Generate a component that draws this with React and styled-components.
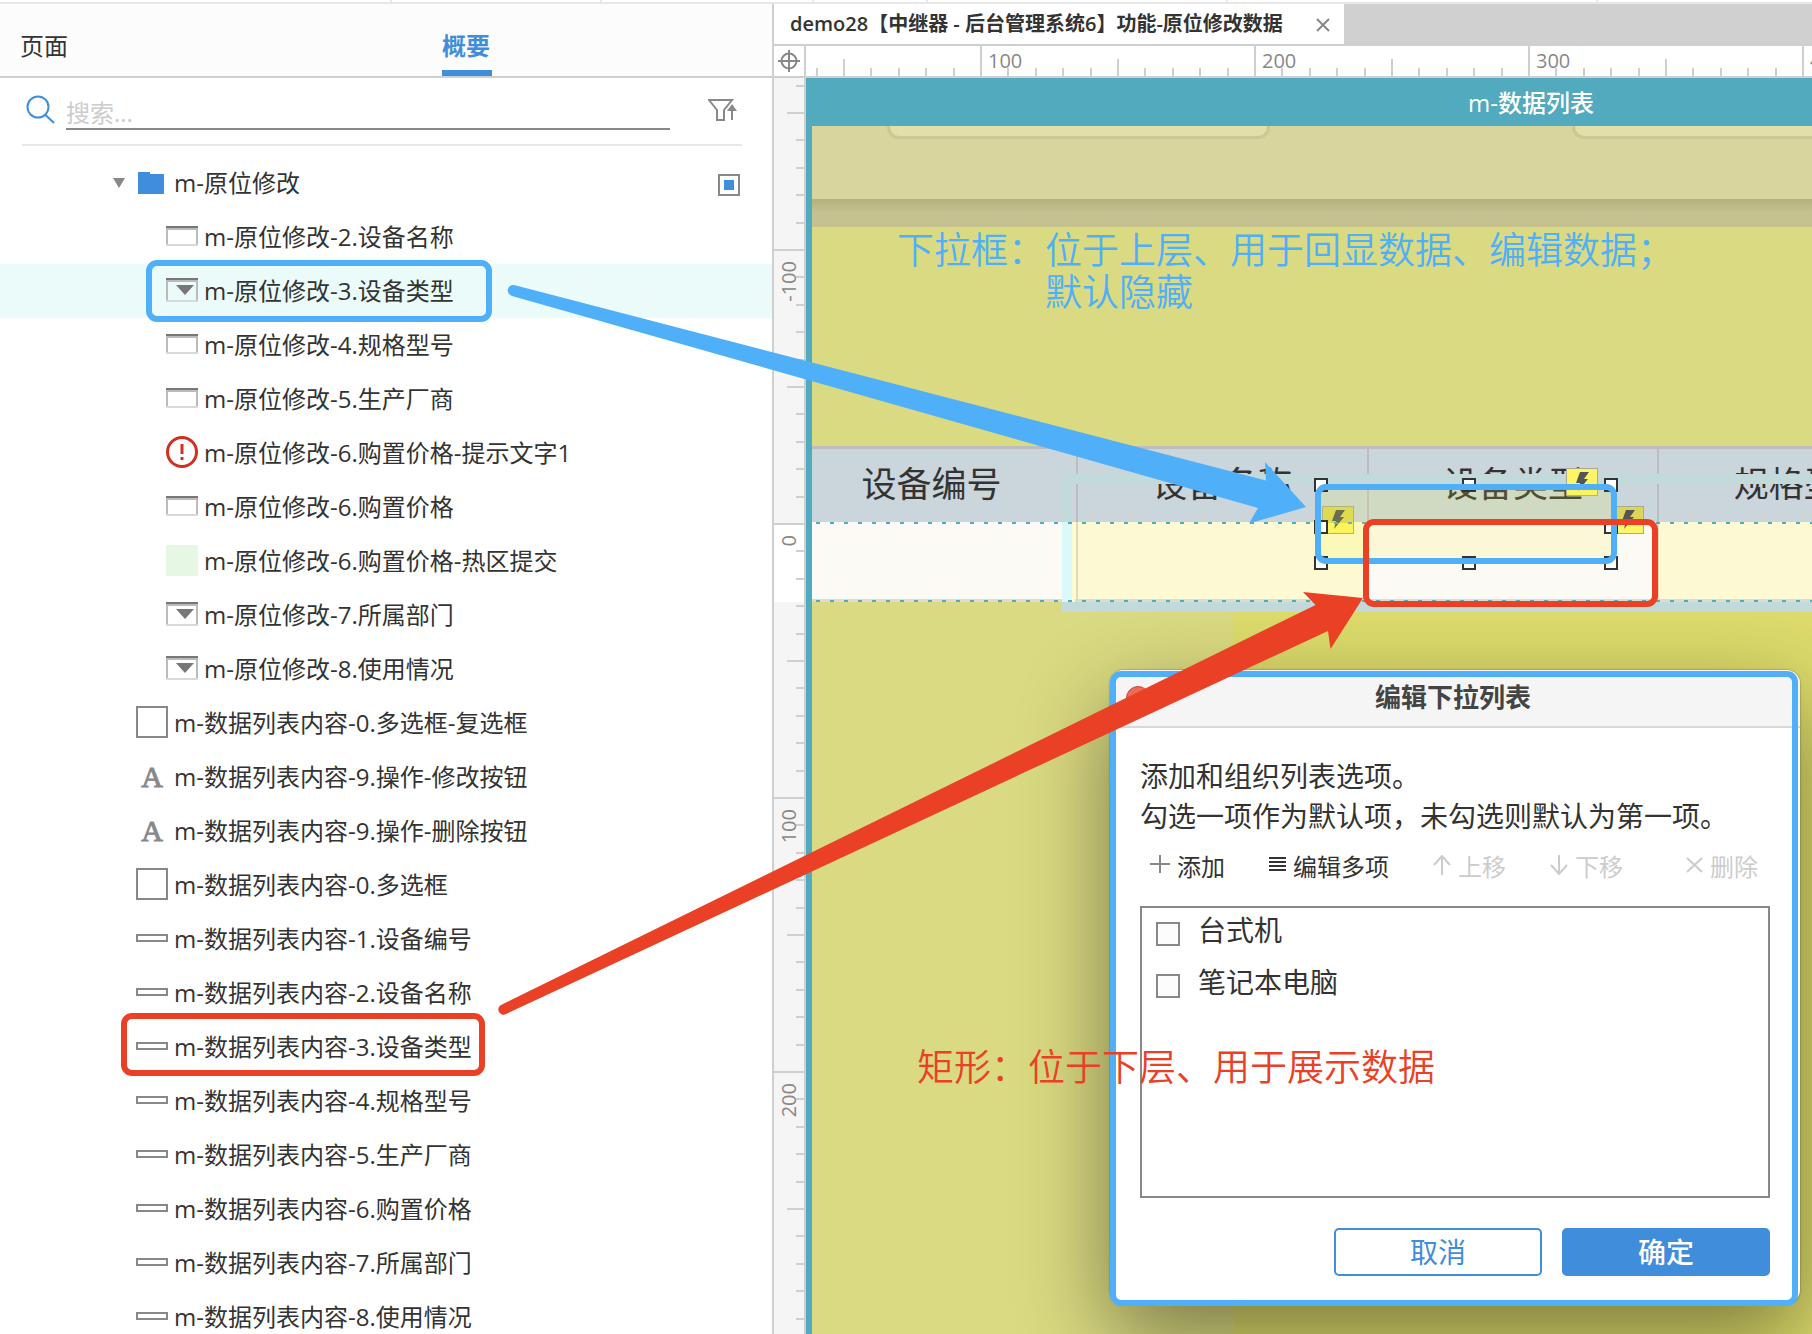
import React from 'react'
import styled, { createGlobalStyle, css } from 'styled-components'

const GlobalStyle = createGlobalStyle`
  * {
    box-sizing: border-box;
  }
  body {
    margin: 0;
    overflow: hidden;
    color: #333;
    background: #fff;
    font-family: 'Open Sans', 'Noto Sans CJK SC', sans-serif;
  }
  button, input {
    font-family: inherit;
    color: inherit;
  }
  button {
    padding: 0;
    border: none;
    background: none;
  }
  ul {
    list-style: none;
    margin: 0;
    padding: 0;
  }
`

const children = [
  { icon: 'input', name: 'm-原位修改-2.设备名称' },
  { icon: 'select', name: 'm-原位修改-3.设备类型', active: true },
  { icon: 'input', name: 'm-原位修改-4.规格型号' },
  { icon: 'input', name: 'm-原位修改-5.生产厂商' },
  { icon: 'warn', name: 'm-原位修改-6.购置价格-提示文字1' },
  { icon: 'input', name: 'm-原位修改-6.购置价格' },
  { icon: 'hot', name: 'm-原位修改-6.购置价格-热区提交' },
  { icon: 'select', name: 'm-原位修改-7.所属部门' },
  { icon: 'select', name: 'm-原位修改-8.使用情况' },
]

const items = [
  { icon: 'box', name: 'm-数据列表内容-0.多选框-复选框' },
  { icon: 'text', name: 'm-数据列表内容-9.操作-修改按钮' },
  { icon: 'text', name: 'm-数据列表内容-9.操作-删除按钮' },
  { icon: 'box', name: 'm-数据列表内容-0.多选框' },
  { icon: 'rect', name: 'm-数据列表内容-1.设备编号' },
  { icon: 'rect', name: 'm-数据列表内容-2.设备名称' },
  { icon: 'rect', name: 'm-数据列表内容-3.设备类型' },
  { icon: 'rect', name: 'm-数据列表内容-4.规格型号' },
  { icon: 'rect', name: 'm-数据列表内容-5.生产厂商' },
  { icon: 'rect', name: 'm-数据列表内容-6.购置价格' },
  { icon: 'rect', name: 'm-数据列表内容-7.所属部门' },
  { icon: 'rect', name: 'm-数据列表内容-8.使用情况' },
]

const columns = ['设备编号', '设备名称', '设备类型', '规格型号', '生产厂商']
const handles = [[0, 0], [148, 0], [290, 0], [0, 42], [290, 42], [0, 78], [148, 78], [290, 78]]

const WidgetIcon = ({ type }) => {
  if (type === 'text') return <LetterIcon>A</LetterIcon>
  return (
    <svg width='32' height='34' viewBox='0 0 32 34' fill='none'>
      {type === 'input' && (
        <>
          <path d='M1 8V24M31 8V24' stroke='#bbb' strokeWidth='2' />
          <path d='M0 9H32' stroke='#bbb' strokeWidth='2' />
          <path d='M0 7H32' stroke='#777' strokeWidth='2' />
          <path d='M0 25H32' stroke='#d9d9d9' strokeWidth='2' />
        </>
      )}
      {type === 'select' && (
        <>
          <path d='M1 6V26M31 6V26' stroke='#bbb' strokeWidth='2' />
          <path d='M0 7H32' stroke='#bbb' strokeWidth='2' />
          <path d='M0 5H32' stroke='#777' strokeWidth='2' />
          <path d='M0 27H32' stroke='#d9d9d9' strokeWidth='2' />
          <path d='M10 11H28L19 21Z' fill='#777' />
        </>
      )}
      {type === 'warn' && (
        <>
          <circle cx='16' cy='16' r='14.5' stroke='#cf3020' strokeWidth='3' />
          <path d='M16 8V18M16 21V24' stroke='#cf3020' strokeWidth='3' />
        </>
      )}
      {type === 'hot' && <path d='M0 1H32V32H0Z' fill='#e6f8e3' />}
      {type === 'box' && <path d='M1 1H31V31H1Z' stroke='#888' strokeWidth='2' />}
      {type === 'rect' && <path d='M1 13H31V19H1Z' stroke='#888' strokeWidth='2' />}
    </svg>
  )
}

const Ruler = ({ vertical, labels }) => (
  <RulerTrack $vertical={vertical}>
    {labels.map((label, i) => (
      <Century key={i} $vertical={vertical}>
        {Array.from({ length: 10 }, (_, n) => (
          <Tick key={n} $vertical={vertical} $size={n === 0 ? 30 : n === 5 ? 17 : 8}>
            {n === 0 && label && <TickLabel $vertical={vertical}>{label}</TickLabel>}
          </Tick>
        ))}
      </Century>
    ))}
  </RulerTrack>
)

const Bolt = () => (
  <svg width='14' height='20' viewBox='0 0 14 20'>
    <path d='M5 0H14L9 7H13L3 19L5 11H1Z' fill='#555' />
  </svg>
)

const Outline = () => (
  <Sidebar>
    <Tabs>
      <Tab type='button'>页面</Tab>
      <Tab type='button' $active>概要</Tab>
    </Tabs>
    <Search>
      <svg width='30' height='30' viewBox='0 0 30 30' fill='none' stroke='#3f8ddb' strokeWidth='2'>
        <circle cx='12' cy='12' r='10.5' />
        <path d='M19.5 20L28 28' />
      </svg>
      <SearchInput aria-label='搜索' placeholder='搜索...' />
      <FilterButton type='button' aria-label='筛选'>
        <svg width='30' height='24' viewBox='0 0 30 24' fill='none' stroke='#888' strokeWidth='2'>
          <path d='M1 2H24L16 12V22H9V12L1 2Z' />
          <path d='M24 22V12' />
          <path d='M19 13L24 6L29 13Z' fill='#888' stroke='none' />
        </svg>
      </FilterButton>
    </Search>
    <ul>
      <Row $level={0}>
        <svg width='12' height='10' viewBox='0 0 12 10'>
          <path d='M0 0H12L6 10Z' fill='#888' />
        </svg>
        <Folder width='26' height='22' viewBox='0 0 26 22'>
          <path d='M0 0H12V2H26V22H0Z' fill='#3f8ddb' />
        </Folder>
        <RowName>m-原位修改</RowName>
        <Visible type='checkbox' aria-label='显示 m-原位修改' defaultChecked />
      </Row>
      {children.map((item, i) => (
        <Row key={i} $level={2} $active={item.active}>
          <WidgetIcon type={item.icon} />
          <span>{item.name}</span>
        </Row>
      ))}
      {items.map((item, i) => (
        <Row key={i} $level={1}>
          <WidgetIcon type={item.icon} />
          <span>{item.name}</span>
        </Row>
      ))}
    </ul>
  </Sidebar>
)

const ListDialog = () => (
  <Dialog role='dialog' aria-labelledby='dialog-title'>
    <DialogHeader>
      <DialogClose type='button' aria-label='关闭' />
      <DialogTitle id='dialog-title'>编辑下拉列表</DialogTitle>
    </DialogHeader>
    <DialogBody>
      <Hint>
        添加和组织列表选项。
        <br />
        勾选一项作为默认项，未勾选则默认为第一项。
      </Hint>
      <Toolbar>
        <Tool type='button'>
          <svg width='20' height='20' viewBox='0 0 20 20' stroke='#888' strokeWidth='2'>
            <path d='M0 9H20M10 0V18' />
          </svg>
          添加
        </Tool>
        <Tool type='button'>
          <svg width='17' height='18' viewBox='0 0 17 18' stroke='#333' strokeWidth='2'>
            <path d='M0 2H17M0 6H17M0 10H17M0 14H17' />
          </svg>
          编辑多项
        </Tool>
        <Tool type='button' disabled>
          <svg width='18' height='20' viewBox='0 0 18 20' stroke='#ccc' strokeWidth='2' fill='none'>
            <path d='M9 20V2M1 10L9 1L17 10' />
          </svg>
          上移
        </Tool>
        <Tool type='button' disabled>
          <svg width='18' height='20' viewBox='0 0 18 20' stroke='#ccc' strokeWidth='2' fill='none'>
            <path d='M9 0V18M1 10L9 19L17 10' />
          </svg>
          下移
        </Tool>
        <Tool type='button' disabled>
          <svg width='17' height='18' viewBox='0 0 17 18' stroke='#ccc' strokeWidth='2'>
            <path d='M1 2L16 16M16 2L1 16' />
          </svg>
          删除
        </Tool>
      </Toolbar>
      <Options>
        {['台式机', '笔记本电脑'].map((name) => (
          <Option key={name}>
            <Check type='checkbox' />
            <span>{name}</span>
          </Option>
        ))}
      </Options>
      <Actions>
        <Action type='button'>取消</Action>
        <Action type='button' $primary>确定</Action>
      </Actions>
    </DialogBody>
  </Dialog>
)

const App = () => (
  <>
    <GlobalStyle />
    <Page>
      <TopStrip>
        <i />
        <i />
        <i />
        <i />
        <i />
        <i />
      </TopStrip>
      <Main>
        <Outline />
        <Workspace>
          <FileTabs>
            <FileTab>
              demo28【中继器 - 后台管理系统6】功能-原位修改数据
              <button type='button' aria-label='关闭标签'>
                <svg width='14' height='14' viewBox='0 0 14 14' stroke='#888' strokeWidth='2'>
                  <path d='M1 1L13 13M13 1L1 13' />
                </svg>
              </button>
            </FileTab>
          </FileTabs>
          <Board>
            <Corner>
              <svg width='22' height='22' viewBox='0 0 22 22' fill='none' stroke='#888' strokeWidth='2'>
                <circle cx='11' cy='11' r='7.5' />
                <path d='M11 0V22M0 11H22' />
              </svg>
            </Corner>
            <Ruler labels={['', '100', '200', '300', '400']} />
            <Ruler vertical labels={['', '-100', '0', '100', '200']} />
            <Canvas>
              <ArtTitle>m-数据列表</ArtTitle>
              <ArtBody>
                <FormPanel>
                  <Field />
                  <Field />
                </FormPanel>
                <PanelShadow />
                <Table>
                  <thead>
                    <tr>
                      {columns.map((name) => <th key={name}>{name}</th>)}
                    </tr>
                  </thead>
                  <tbody>
                    <tr>
                      {columns.map((name, i) => <Cell key={name} $plain={i === 0 || i === 2} />)}
                    </tr>
                  </tbody>
                </Table>
                <Ground />
              </ArtBody>
              <HotArea />
              <Badge $x={760} $y={390}><Bolt /></Badge>
              <Badge $x={516} $y={428} $shaded><Bolt /></Badge>
              <Badge $x={806} $y={428} $shaded><Bolt /></Badge>
              <RepeaterEdge />
              <Selection>
                {handles.map(([x, y]) => (
                  <Handle key={`${x}-${y}`} style={{ left: x, top: y }} />
                ))}
              </Selection>
              <ListDialog />
            </Canvas>
          </Board>
        </Workspace>
      </Main>
      <Frame $x={146} $y={260} $w={346} $h={62} />
      <Frame $x={121} $y={1013} $w={364} $h={63} $red />
      <Frame $x={1315} $y={484} $w={302} $h={80} />
      <Frame $x={1363} $y={519} $w={295} $h={88} $red />
      <Frame $x={1110} $y={671} $w={688} $h={635} />
      <Arrows>
        <path
          d='M514 285L1266 480.500L1265 462L1306 507L1249 523.500L1258 508L512 296A5.600 5.600 0 0 1 514 285Z'
          fill='#50aff9'
        />
        <path
          d='M501 1005L1315.500 605L1303 592L1363 598L1330.500 649L1328 631L506 1014A5 5 0 0 1 501 1005Z'
          fill='#ea4126'
        />
      </Arrows>
      <Note $x={897} $y={229}>
        <span>下拉框：</span>
        <span>
          位于上层、用于回显数据、编辑数据；
          <br />
          默认隐藏
        </span>
      </Note>
      <Note $x={917} $y={1046} $red>矩形：位于下层、用于展示数据</Note>
    </Page>
  </>
)

const Page = styled.div`
  position: relative;
  display: flex;
  flex-direction: column;
  height: 100vh;
  overflow: hidden;
`

const TopStrip = styled.div`
  display: grid;
  flex: 0 0 4px;
  grid-template-columns: 392px 210px 212px 114px 300px 370px;
  border-bottom: 2px solid #e7e7e7;
  i {
    border-right: 2px solid #e7e7e7;
  }
`

const Main = styled.div`
  display: flex;
  flex: 1;
  min-height: 0;
`

const Sidebar = styled.aside`
  flex: 0 0 774px;
  overflow: hidden;
  border-right: 2px solid #cfcfcf;
`

const Tabs = styled.div`
  display: grid;
  grid-template-columns: 422px 1fr;
  height: 74px;
  padding-left: 20px;
  background: #fcfcfc;
  border-bottom: 2px solid #cfcfcf;
`

const Tab = styled.button`
  justify-self: start;
  padding-top: 18px;
  border-bottom: 6px solid transparent;
  font-size: 24px;
  line-height: 36px;
  text-align: left;
  ${({ $active }) => $active && css`
    width: 50px;
    color: #3f8ddb;
    border-bottom-color: #3f8ddb;
    font-weight: 700;
  `}
`

const Search = styled.div`
  display: flex;
  align-items: center;
  height: 68px;
  margin: 0 30px 0 22px;
  padding: 0 4px 2px;
  border-bottom: 2px solid #e7e7e7;
`

const SearchInput = styled.input`
  flex: 1;
  height: 36px;
  margin: 4px 38px 0 10px;
  padding: 2px 0 0;
  border: none;
  border-bottom: 2px solid #888;
  outline: none;
  font-size: 24px;
  line-height: 34px;
  &::placeholder {
    color: #ccc;
  }
`

const FilterButton = styled.button`
  display: flex;
`

const Row = styled.li`
  display: flex;
  align-items: center;
  gap: 6px;
  height: 54px;
  padding-left: ${({ $level }) => [113, 136, 166][$level]}px;
  padding-right: 32px;
  background: ${({ $active }) => ($active ? '#ebfbfa' : 'transparent')};
  font-size: 24px;
  line-height: 36px;
  white-space: nowrap;
  ul > &:first-child {
    margin-top: 10px;
  }
`

const RowName = styled.span`
  flex: 1;
`

const Folder = styled.svg`
  margin: 0 4px 0 7px;
`

const LetterIcon = styled.span`
  width: 32px;
  color: #888;
  font-family: 'Liberation Serif', serif;
  font-size: 30px;
  text-align: center;
  -webkit-text-stroke: 1px #888;
`

const Visible = styled.input`
  appearance: none;
  width: 22px;
  height: 22px;
  margin: 4px 0 0;
  padding: 4px;
  border: 2px solid #888;
  &:checked {
    background: #3f8ddb content-box;
  }
`

const Workspace = styled.section`
  display: flex;
  flex: 1;
  flex-direction: column;
  min-width: 0;
`

const FileTabs = styled.div`
  display: flex;
  flex: 0 0 42px;
  background: #d0d0d0;
  border-bottom: 2px solid #cfcfcf;
`

const FileTab = styled.div`
  display: flex;
  align-items: center;
  justify-content: space-between;
  width: 570px;
  padding: 0 14px 4px 16px;
  background: #fff;
  font-size: 20px;
  font-weight: 600;
  white-space: nowrap;
  button {
    display: flex;
    margin-top: 6px;
  }
`

const Board = styled.div`
  display: grid;
  flex: 1;
  grid-template-columns: 32px 1fr;
  grid-template-rows: 32px 1fr;
  min-height: 0;
`

const Corner = styled.div`
  display: flex;
  align-items: center;
  justify-content: center;
  border-right: 2px solid #cfcfcf;
  border-bottom: 2px solid #cfcfcf;
`

const RulerTrack = styled.div`
  display: flex;
  overflow: hidden;
  border-bottom: 2px solid #cfcfcf;
  & > :first-child {
    margin-left: -100px;
  }
  ${({ $vertical }) => $vertical && css`
    flex-direction: column;
    border-bottom: none;
    border-right: 2px solid #cfcfcf;
    background: linear-gradient(#f5f5f5 445px, #fff 445px, #fff 524px, #f5f5f5 524px);
    & > :first-child {
      margin: -103px 0 0;
    }
  `}
`

const Century = styled.div`
  display: flex;
  flex: 0 0 274px;
  flex-direction: ${({ $vertical }) => ($vertical ? 'column' : 'row')};
  align-items: flex-end;
`

const Tick = styled.div`
  flex: 1;
  min-width: 0;
  min-height: 0;
  color: #888;
  ${({ $vertical, $size }) => $vertical
    ? css`width: ${$size}px; border-top: 2px solid #cfcfcf;`
    : css`height: ${$size}px; border-left: 2px solid #cfcfcf;`}
`

const TickLabel = styled.span`
  display: block;
  font-size: 20px;
  line-height: 30px;
  white-space: nowrap;
  ${({ $vertical }) => $vertical
    ? css`
      writing-mode: vertical-rl;
      transform: rotate(180deg);
      width: 30px;
      height: max-content;
      margin-top: 10px;
    `
    : css`padding-left: 6px;`}
`

const Canvas = styled.div`
  position: relative;
  display: flex;
  flex-direction: column;
  min-width: 0;
  overflow: hidden;
`

const ArtTitle = styled.div`
  flex: 0 0 48px;
  width: 1450px;
  padding-top: 2px;
  background: #51aabd;
  color: #fff;
  font-size: 24px;
  font-weight: 500;
  line-height: 46px;
  text-align: center;
`

const ArtBody = styled.div`
  display: flex;
  flex: 1;
  flex-direction: column;
  width: 1450px;
  overflow: hidden;
  border-left: 6px solid #51aabd;
  background: #dada82;
`

const FormPanel = styled.div`
  display: flex;
  flex-shrink: 0;
  gap: 302px;
  height: 73px;
  padding-left: 75px;
  background: #d8d59f;
`

const Field = styled.div`
  flex: 0 0 383px;
  height: 13px;
  border: 3px solid #cbc893;
  border-top: none;
  border-radius: 0 0 12px 12px;
  background: #e1dfaa;
`

const PanelShadow = styled.div`
  flex-shrink: 0;
  height: 28px;
  background: linear-gradient(#b5b17e, #c5c28f 14px);
`

const Table = styled.table`
  width: 1454px;
  margin: 219px 0 0 -25px;
  border-spacing: 0;
  table-layout: fixed;
  th {
    height: 76px;
    padding: 0 0 4px;
    border-top: 3px solid #bdbdbf;
    border-right: 2px solid #bdbdbf;
    background: #cbd5dc;
    font-size: 35px;
    font-weight: 400;
    line-height: 68px;
  }
`

const Cell = styled.td`
  height: 80px;
  padding: 0;
  border-bottom: 3px solid #dddcd0;
  border-right: 2px solid ${({ $plain }) => ($plain ? '#dfdbb9' : 'transparent')};
  background: ${({ $plain }) => ($plain ? '#fcfaf5' : '#fdf9d3')};
`

const Ground = styled.div`
  flex: 1;
  background: linear-gradient(90deg, #dada82 422px, #dcdb6b 422px);
`

const HotArea = styled.div`
  position: absolute;
  top: 396px;
  right: 0;
  left: 256px;
  height: 138px;
  border: 10px solid #c2dada;
  border-right: none;
  &::before {
    content: '';
    position: absolute;
    top: 38px;
    left: -10px;
    width: 13px;
    height: 80px;
    background: linear-gradient(90deg, #dcf9fa 10px, #fdf9d3 10px);
  }
`

const RepeaterEdge = styled.div`
  position: absolute;
  top: 444px;
  right: 0;
  left: 6px;
  height: 80px;
  --dots: repeating-linear-gradient(90deg, transparent 0 4px, #51aabd 4px 8px, transparent 8px 14px);
  background: var(--dots) top / 100% 2px no-repeat, var(--dots) bottom / 100% 2px no-repeat;
`

const Selection = styled.div`
  position: absolute;
  top: 407px;
  left: 515px;
  width: 290px;
  height: 78px;
  background: rgba(240, 240, 40, 0.15);
`

const Handle = styled.span`
  position: absolute;
  width: 14px;
  height: 14px;
  margin: -7px 0 0 -7px;
  border: 2px solid #333;
  background: #fff;
`

const Badge = styled.span`
  position: absolute;
  top: ${({ $y }) => $y}px;
  left: ${({ $x }) => $x}px;
  display: flex;
  align-items: center;
  justify-content: center;
  width: 32px;
  height: 28px;
  border: 1px solid #a9a98f;
  background: ${({ $shaded }) => ($shaded ? 'linear-gradient(#dbd65a 16px, #fdf566 16px)' : '#fdf566')};
`

const Dialog = styled.div`
  position: absolute;
  top: 592px;
  left: 304px;
  width: 690px;
  overflow: hidden;
  border-radius: 14px;
  background: #fff;
  box-shadow: 0 0 2px rgba(0, 0, 0, 0.5), 0 34px 90px rgba(0, 0, 0, 0.45);
`

const DialogHeader = styled.div`
  display: flex;
  align-items: center;
  height: 58px;
  padding: 0 16px;
  background: #f5f5f5;
  border-bottom: 2px solid #d8d8d8;
`

const DialogClose = styled.button`
  width: 24px;
  height: 24px;
  border: 1px solid #c94b41;
  border-radius: 50%;
  background: #ec6a5e;
`

const DialogTitle = styled.h2`
  flex: 1;
  margin: 0 28px 2px 0;
  color: #444;
  font-size: 26px;
  font-weight: 700;
  line-height: 40px;
  text-align: center;
`

const DialogBody = styled.div`
  padding: 28px 30px;
`

const Hint = styled.p`
  margin: 0;
  font-size: 28px;
  line-height: 40px;
  white-space: nowrap;
`

const Toolbar = styled.div`
  display: flex;
  gap: 44px;
  height: 70px;
  padding: 0 12px 0 10px;
`

const Tool = styled.button`
  display: flex;
  align-items: center;
  gap: 7px;
  height: 58px;
  font-size: 24px;
  &:disabled {
    color: #ccc;
  }
  &:last-child {
    margin-left: auto;
  }
`

const Options = styled.div`
  height: 292px;
  border: 2px solid #888;
`

const Option = styled.label`
  display: flex;
  align-items: center;
  gap: 18px;
  height: 52px;
  padding-left: 14px;
  font-size: 28px;
  line-height: 40px;
  span {
    margin-bottom: 8px;
  }
`

const Check = styled.input`
  appearance: none;
  width: 24px;
  height: 24px;
  margin: 0;
  border: 2px solid #888;
  background: #fcfcfc;
`

const Actions = styled.div`
  display: flex;
  justify-content: flex-end;
  gap: 20px;
  margin-top: 30px;
`

const Action = styled.button`
  width: 208px;
  height: 48px;
  border: 2px solid #3f8ddb;
  border-radius: 5px;
  background: ${({ $primary }) => ($primary ? '#3f8ddb' : '#fff')};
  color: ${({ $primary }) => ($primary ? '#fff' : '#3f8ddb')};
  font-size: 28px;
  font-weight: ${({ $primary }) => ($primary ? 500 : 400)};
  line-height: 40px;
`

const Frame = styled.div`
  position: absolute;
  top: ${({ $y }) => $y}px;
  left: ${({ $x }) => $x}px;
  width: ${({ $w }) => $w}px;
  height: ${({ $h }) => $h}px;
  border: 6px solid ${({ $red }) => ($red ? '#ea4126' : '#50aff9')};
  border-radius: 11px;
  pointer-events: none;
`

const Arrows = styled.svg`
  position: absolute;
  inset: 0;
  width: 100%;
  height: 100%;
  pointer-events: none;
`

const Note = styled.p`
  position: absolute;
  top: ${({ $y }) => $y}px;
  left: ${({ $x }) => $x}px;
  display: flex;
  margin: 0;
  color: ${({ $red }) => ($red ? '#ea4126' : '#50aff9')};
  font-size: 37px;
  font-weight: 350;
  line-height: 42px;
  white-space: nowrap;
`

export default App
